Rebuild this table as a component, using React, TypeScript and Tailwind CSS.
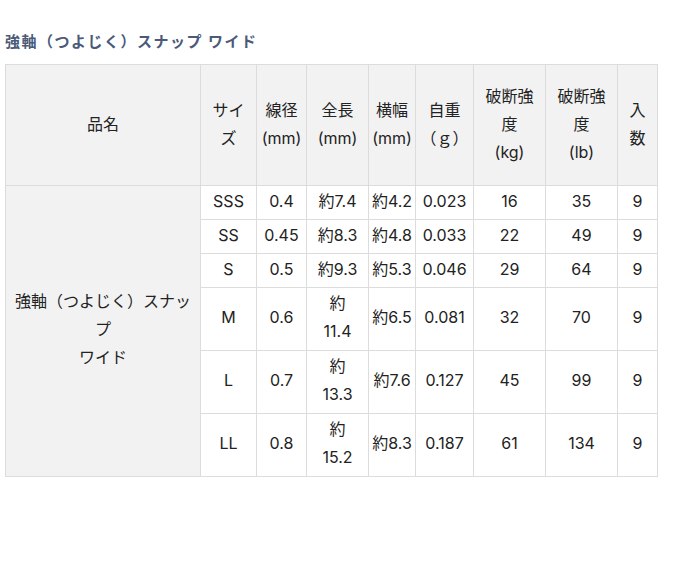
const head = ["サイ\nズ", "線径\n(mm)", "全長\n(mm)", "横幅\n(mm)", "自重\n（ｇ）", "破断強\n度\n(kg)", "破断強\n度\n(lb)", "入\n数"];

const rows = [
  ["SSS", "0.4", "約7.4", "約4.2", "0.023", "16", "35", "9"],
  ["SS", "0.45", "約8.3", "約4.8", "0.033", "22", "49", "9"],
  ["S", "0.5", "約9.3", "約5.3", "0.046", "29", "64", "9"],
  ["M", "0.6", "約\n11.4", "約6.5", "0.081", "32", "70", "9"],
  ["L", "0.7", "約\n13.3", "約7.6", "0.127", "45", "99", "9"],
  ["LL", "0.8", "約\n15.2", "約8.3", "0.187", "61", "134", "9"],
];

const widths = [195, 56, 50, 62, 47, 58, 72, 72, 40];

export default function App() {
  return (
    <div
      className="min-h-[563px] w-[680px] bg-white px-[5px] pt-[30px] text-[#222]"
      style={{ fontFamily: 'Inter, "Noto Sans CJK JP", sans-serif' }}
    >
      <h2 className="mb-[10px] text-[15px] leading-[24px] font-bold tracking-[1.5px] text-[#4b5a78]">
        強軸（つよじく）スナップ ワイド
      </h2>
      <table className="w-[652px] table-fixed border-collapse text-center text-[16px] leading-[28px]">
        <colgroup>
          {widths.map((w, i) => (
            <col key={i} style={{ width: w }} />
          ))}
        </colgroup>
        <thead>
          <tr className="h-[121px] bg-[#f2f2f2]">
            <th className="border border-[#dcdcdc] px-[4px] pb-[3px] font-normal">品名</th>
            {head.map((h) => (
              <th key={h} className="border border-[#dcdcdc] px-[2px] pb-[3px] font-normal whitespace-pre-line">
                {h}
              </th>
            ))}
          </tr>
        </thead>
        <tbody>
          {rows.map((r, i) => (
            <tr key={r[0]} className={i < 3 ? "h-[34px]" : "h-[63px]"}>
              {i === 0 && (
                <td rowSpan={6} className="border border-[#dcdcdc] bg-[#f2f2f2] px-[8px] pb-[4px]">
                  強軸（つよじく）スナップ
                  <br />
                  ワイド
                </td>
              )}
              {r.map((c, j) => (
                <td key={j} className="border border-[#dcdcdc] px-[1px] pt-0 pb-[4px] whitespace-pre-line">
                  {c}
                </td>
              ))}
            </tr>
          ))}
        </tbody>
      </table>
    </div>
  );
}
